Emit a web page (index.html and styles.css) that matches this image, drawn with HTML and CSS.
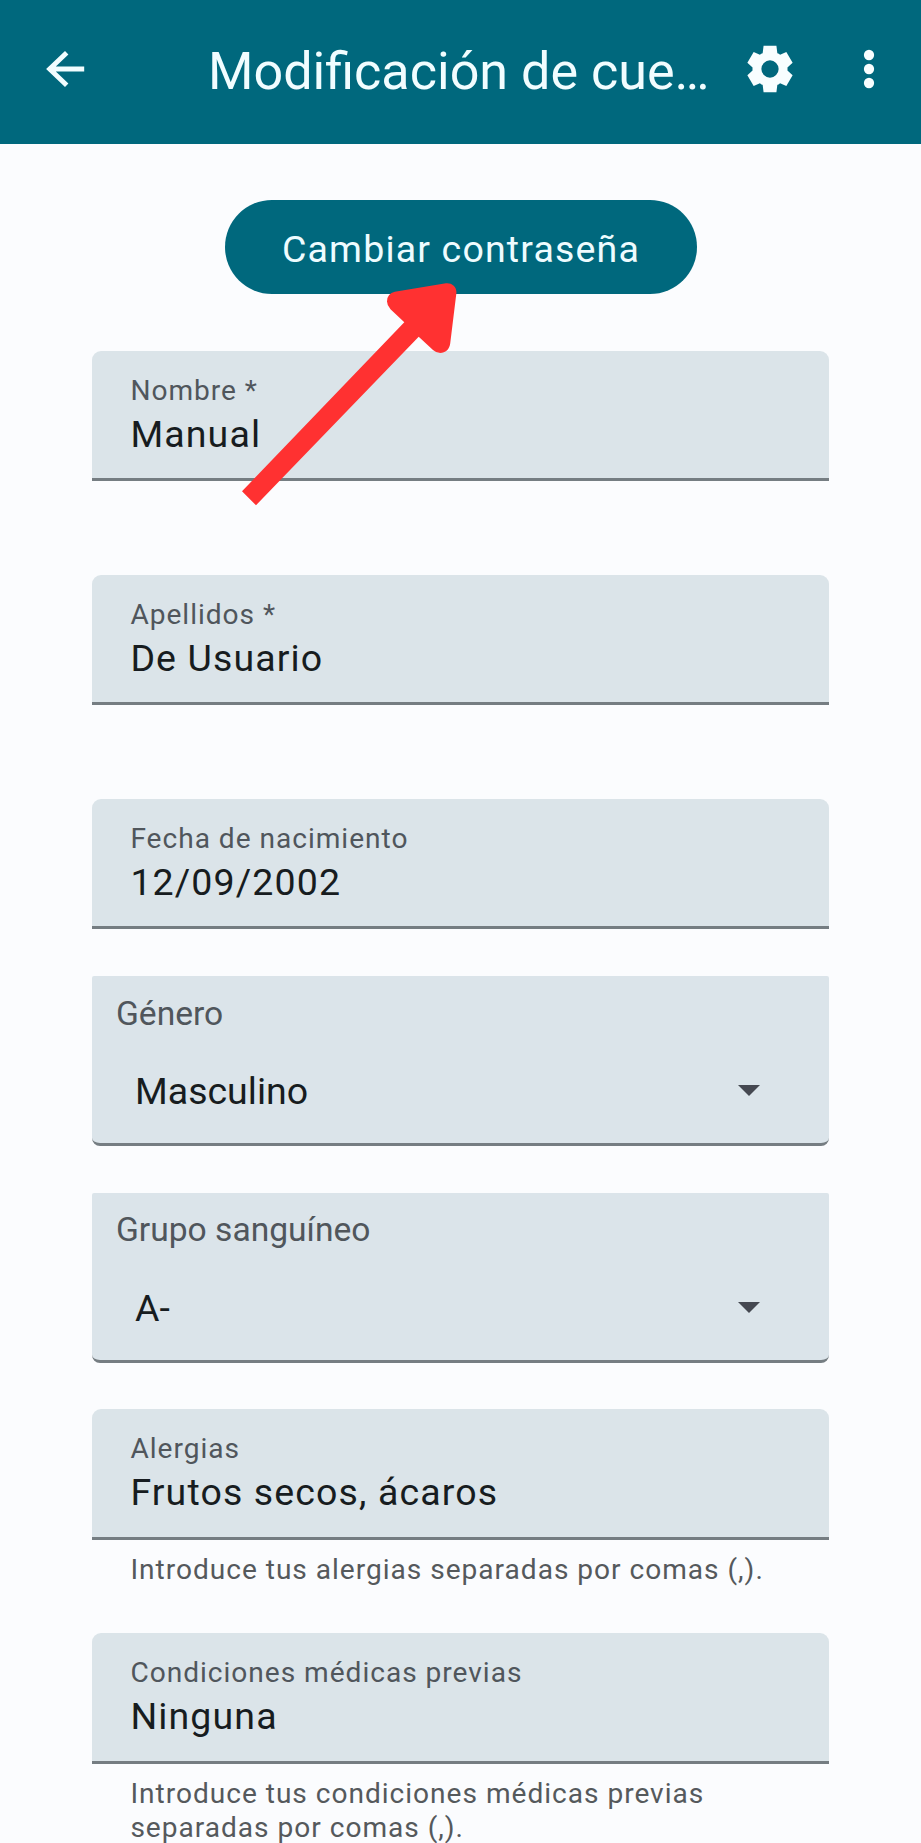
FILE: index.html
```html
<!DOCTYPE html>
<html lang="es">
<head>
<meta charset="utf-8">
<title>Modificación de cuenta</title>
<link rel="stylesheet" href="styles.css">
</head>
<body>
<header class="appbar">
  <svg class="icon icon-back" viewBox="0 0 24 24"><path d="M19.8 12H5M12.3 5L5 12l7.3 7"/></svg>
  <h1 class="title">Modificación de cue…</h1>
  <svg class="icon icon-settings" viewBox="0 0 24 24"><path d="M9.25 22l-.4-3.2q-.325-.125-.612-.3t-.563-.375L5 19.3l-2.7-4.6 2.225-2.025Q4.5 12.5 4.5 12.338v-.675q0-.163.025-.338L2.3 9.3 5 4.7l2.675 1.175q.275-.2.575-.375t.6-.3L9.25 2h5.5l.4 3.2q.325.125.613.3t.562.375L19 4.7l2.7 4.6-2.225 2.025q.025.175.025.338v.674q0 .163-.025.338L21.7 14.7 19 19.3l-2.675-1.175q-.275.2-.575.375t-.6.3l-.4 3.2zM12 15.7a3.7 3.7 0 1 0 0-7.4 3.7 3.7 0 0 0 0 7.4z"/></svg>
  <svg class="icon icon-more" viewBox="0 0 24 24"><circle cx="12" cy="6" r="2.2"/><circle cx="12" cy="12" r="2.2"/><circle cx="12" cy="18" r="2.2"/></svg>
</header>
<main class="form">
  <button class="button" type="button">Cambiar contraseña</button>
  <div class="group">
    <div class="field"><span class="label">Nombre *</span><span class="value">Manual</span></div>
  </div>
  <div class="group">
    <div class="field"><span class="label">Apellidos *</span><span class="value">De Usuario</span></div>
  </div>
  <div class="group group-date">
    <div class="field"><span class="label">Fecha de nacimiento</span><span class="value">12/09/2002</span></div>
  </div>
  <div class="select">
    <span class="select-label">Género</span>
    <div class="select-row"><span>Masculino</span><svg class="caret" viewBox="0 0 22 11"><path d="M0 0h22L11 11z"/></svg></div>
  </div>
  <div class="select">
    <span class="select-label">Grupo sanguíneo</span>
    <div class="select-row"><span>A-</span><svg class="caret" viewBox="0 0 22 11"><path d="M0 0h22L11 11z"/></svg></div>
  </div>
  <div class="group">
    <div class="field"><span class="label">Alergias</span><span class="value">Frutos secos, ácaros</span></div>
    <p class="helper">Introduce tus alergias separadas por comas (,).</p>
  </div>
  <div class="group">
    <div class="field"><span class="label">Condiciones médicas previas</span><span class="value">Ninguna</span></div>
    <p class="helper">Introduce tus condiciones médicas previas<br>separadas por comas (,).</p>
  </div>
</main>
<svg class="pointer" viewBox="242 283 215 223"><path d="M242 491.3L404.3 322.3 390.5 309.2Q387 305.5 387 301.5 387.3 293.2 394.8 291.8L446 283.2C452 282.7 456.8 286.5 456.4 293L450.2 343.5C449.3 349.5 445.5 353 440.2 353Q436.3 353 433 350L418.7 336.7 256 505.3z"/></svg>
</body>
</html>
```

FILE: styles.css
```css
* {
  box-sizing: border-box;
}

body {
  margin: 0;
  width: 921px;
  height: 1843px;
  position: relative;
  overflow: hidden;
  background: #fbfcfe;
  color: #171c20;
  font-family: Roboto, sans-serif;
}

.appbar {
  display: flex;
  align-items: center;
  height: 144px;
  padding: 0 24px 6px 38px;
  background: #00687d;
}

.icon {
  flex: none;
  width: 56px;
  height: 56px;
  fill: #f8feff;
}

.icon-back {
  fill: none;
  stroke: #f1fdff;
  stroke-width: 2.1;
}

.title {
  flex: 1;
  margin: 6px 0 0 114px;
  color: #f1fdff;
  font-size: 52.1px;
  font-weight: 400;
  line-height: 60px;
  white-space: nowrap;
}

.icon-more {
  margin-left: 43px;
}

.form {
  display: flex;
  flex-direction: column;
  width: 737px;
  margin-left: 92px;
  padding-top: 56px;
}

.button {
  align-self: center;
  width: 472px;
  height: 94px;
  margin-bottom: 56.5px;
  padding: 3px 0 0 1px;
  border: 0;
  border-radius: 47px;
  background: #00687d;
  color: #eefcff;
  font: 400 37.5px/44px Roboto, sans-serif;
  letter-spacing: 1.17px;
}

.group {
  height: 224.2px;
}

.group-date {
  height: 177.1px;
}

.field {
  display: flex;
  flex-direction: column;
  height: 130.4px;
  padding: 23px 37px 0 38.4px;
  border-bottom: 3px solid #757d82;
  border-radius: 9px 9px 0 0;
  background: #dbe4e9;
}

.label,
.helper {
  color: #50565c;
  font-size: 28.1px;
  line-height: 33.4px;
  letter-spacing: 0.98px;
}

.value {
  font-size: 37.5px;
  line-height: 44px;
  letter-spacing: 1.12px;
  margin-top: 4.6px;
}

.helper {
  margin: 13.4px 37px 0 38.4px;
  color: #55595c;
}

.select {
  height: 170.2px;
  margin-bottom: 46.4px;
  padding: 17.6px 69px 0 24px;
  border-bottom: 3px solid #757d82;
  border-radius: 2px 2px 8px 8px;
  background: #dbe4ea;
}

.select-label {
  display: block;
  color: #50565c;
  font-size: 33.6px;
  line-height: 39px;
}

.select-row {
  display: flex;
  align-items: center;
  justify-content: space-between;
  margin-top: 36.4px;
  padding-left: 19px;
  font-size: 37.5px;
  line-height: 44px;
}

.caret {
  width: 22px;
  height: 11px;
  fill: #454851;
}

/* Arrow overlay that points at the password button */
.pointer {
  position: absolute;
  left: 242px;
  top: 283px;
  width: 215px;
  height: 223px;
  fill: #ff3131;
}
```
